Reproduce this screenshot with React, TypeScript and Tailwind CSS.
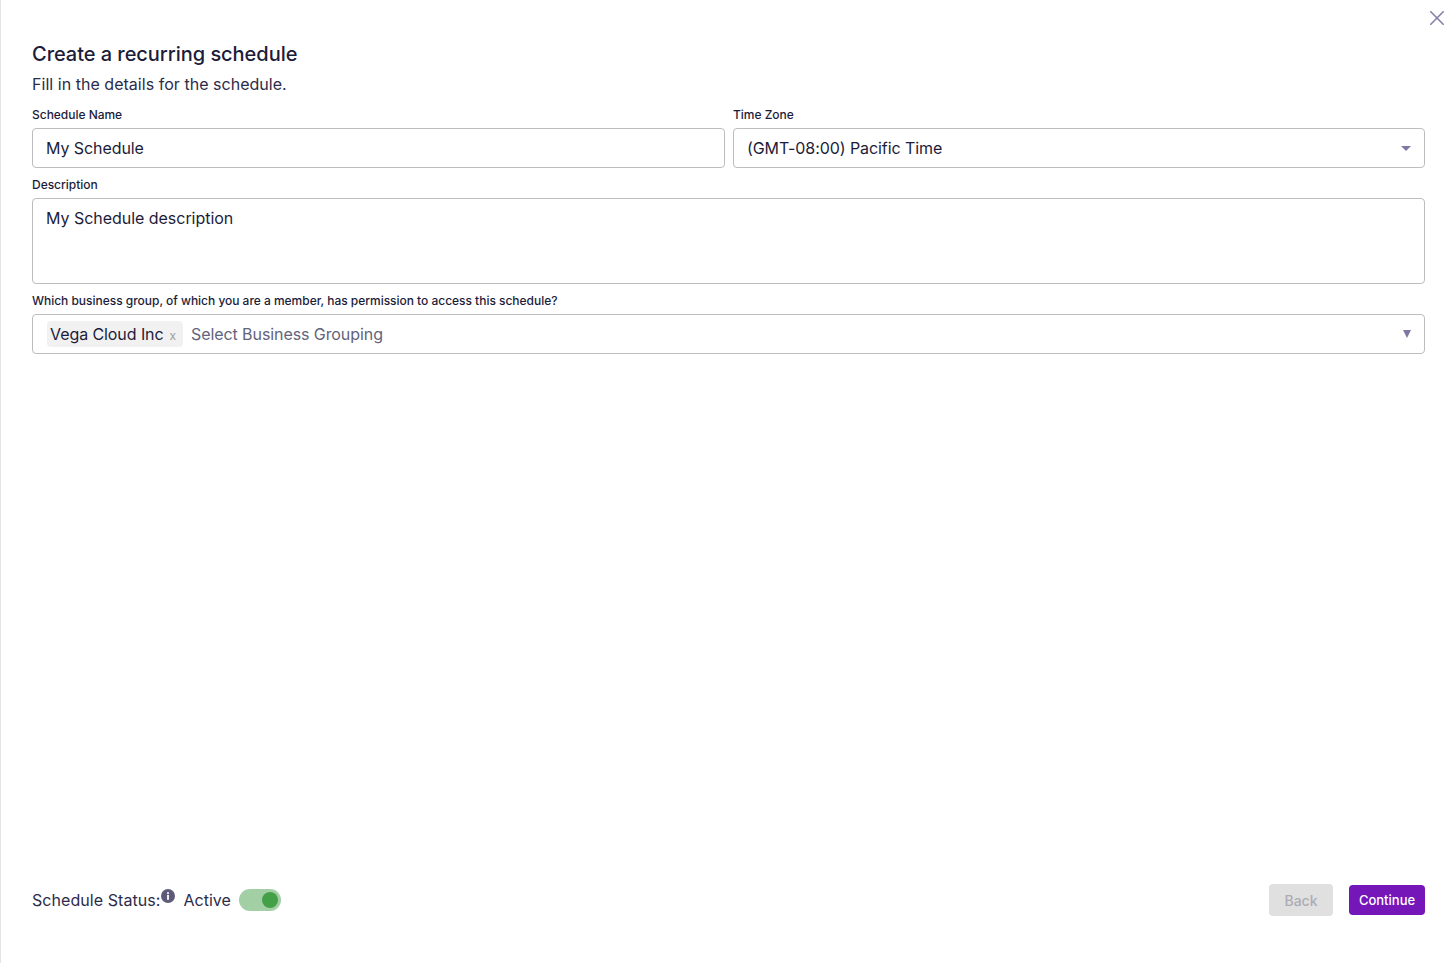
import React from "react";

const labelClass = "block h-[20px] pt-px text-[12px] leading-[20px] font-medium tracking-[-0.002em] text-[#1c1c3a]";
const boxClass = "h-10 w-full rounded border border-[#bdbdbd] bg-white px-[13px] text-[16px] tracking-[-0.005em] text-[#1c1c3a] flex items-center";

export default function App() {
  return (
    <div className="relative flex h-[963px] w-[1450px] flex-col border-l border-[#e4e4e4] bg-white pl-[31px] pr-[25px] font-['Inter',sans-serif] text-[#1c1c3a]">
      {/* Close */}
      <button className="absolute right-[6px] top-[11px] text-[#8480a8]">
        <svg width="14" height="14" viewBox="0 0 14 14" fill="none" stroke="currentColor" strokeWidth="1.6" strokeLinecap="round">
          <path d="M0.8 0.8L13.2 13.2" />
          <path d="M13.2 0.8L0.8 13.2" />
        </svg>
      </button>

      <h2 className="mt-[40px] h-[28px] text-[20px] font-medium leading-[28px] tracking-[-0.002em]">Create a recurring schedule</h2>
      <p className="mt-[4px] h-[24px] text-[16px] leading-[24px] tracking-[0.002em] text-[#2c2c4a]">Fill in the details for the schedule.</p>

      <div className="mt-[8px] grid grid-cols-[693px_692px] gap-x-2">
        <div>
          <label className={labelClass}>Schedule Name</label>
          <div className="mt-[4px]">
            <div className={boxClass}>My Schedule</div>
          </div>
        </div>
        <div>
          <label className={labelClass}>Time Zone</label>
          <div className="mt-[4px]">
            <div className={boxClass + " justify-between"}>
              <span>(GMT-08:00) Pacific Time</span>
              <span className="h-0 w-0 border-x-[5px] border-t-[5px] border-x-transparent border-t-[#7d79a3]"></span>
            </div>
          </div>
        </div>
      </div>

      <label className={labelClass + " mt-[6px]"}>Description</label>
      <div className="mt-[4px] h-[86px] w-full rounded border border-[#bdbdbd] bg-white px-[13px] pt-[7px] text-[16px] leading-[24px] tracking-[-0.002em]">
        My Schedule description
      </div>

      <label className={labelClass + " mt-[6px]"}>Which business group, of which you are a member, has permission to access this schedule?</label>
      <div className={boxClass + " mt-[4px] justify-between"}>
        <div className="flex items-center">
          <span className="ml-px flex h-[26px] w-[136px] items-center rounded-sm bg-[#f1f1f2] pl-[3px]">
            Vega Cloud Inc
            <span className="ml-[6px] mt-[3px] text-[12px] text-[#9b9b9b]">x</span>
          </span>
          <span className="ml-2 text-[#63637c]">Select Business Grouping</span>
        </div>
        <span className="h-0 w-0 border-x-[4.5px] border-t-[8px] border-x-transparent border-t-[#7d79a3]"></span>
      </div>

      {/* Footer */}
      <div className="mt-[530px] flex items-center justify-between">
        <div className="flex items-center">
          <span className="text-[16px] tracking-[0.004em] text-[#2c2c4a]">Schedule Status:</span>
          <svg width="14" height="14" viewBox="0 0 14 14" className="mb-[8px]">
            <circle cx="7" cy="7" r="7" fill="#5c5a78" />
            <circle cx="7" cy="3.9" r="1" fill="#fff" />
            <rect x="6.1" y="5.8" width="1.8" height="5" fill="#fff" />
          </svg>
          <span className="ml-[9px] text-[16px] text-[#2c2c4a]">Active</span>
          <span className="ml-2 flex h-[22px] w-[42px] items-center justify-end rounded-full bg-[#a3cfa5] pr-[3px]">
            <span className="h-4 w-4 rounded-full bg-[#43a047]"></span>
          </span>
        </div>
        <div className="flex items-center gap-4">
          <button className="h-8 w-16 rounded bg-[#e0e0e0] text-[14px] font-medium text-[#acacb4]">Back</button>
          <button className="h-[30px] w-[76px] rounded bg-[#7516b8] pt-px text-[13px] font-medium text-white">Continue</button>
        </div>
      </div>
    </div>
  );
}
